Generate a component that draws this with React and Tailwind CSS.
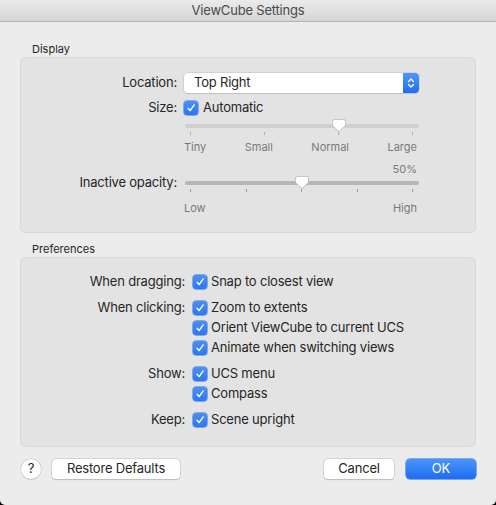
import React from "react"

const font = { fontFamily: "Inter, 'Liberation Sans', sans-serif" }

const Check = ({ className = "" }) => (
  <span
    className={`w-[14px] h-[14px] rounded-[3px] bg-gradient-to-b from-[#4a90f8] to-[#2a76f4] flex items-center justify-center shrink-0 shadow-[0_0_0_0.5px_#2a6bd8] ${className}`}
  >
    <svg width="10" height="10" viewBox="0 0 10 10" fill="none">
      <path d="M2 5.2 L4.1 7.6 L8.2 1.8" stroke="white" strokeWidth="1.4" strokeLinecap="round" strokeLinejoin="round" />
    </svg>
  </span>
)

const Thumb = ({ left }) => (
  <svg
    className="absolute top-[1px] drop-shadow-[0_0.5px_0.5px_rgba(0,0,0,0.3)]"
    style={{ left }}
    width="14"
    height="13"
    viewBox="0 0 14 13"
  >
    <path
      d="M2.5 0.5 H11.5 Q13.5 0.5 13.5 2.5 V6.5 L7 12.5 L0.5 6.5 V2.5 Q0.5 0.5 2.5 0.5 Z"
      fill="white"
      stroke="#bdbdbd"
      strokeWidth="0.6"
    />
  </svg>
)

const Slider = ({ thumb, ticks, trackColor, tickColor }) => (
  <div className="w-[235px]">
    <div className="relative h-[14px]">
      <div className={`absolute left-[1px] right-0 top-[6px] h-[4px] rounded-full ${trackColor}`}></div>
      <Thumb left={thumb} />
    </div>
    <div className="flex justify-between px-[6px] h-[3px]">
      {Array.from({ length: ticks }).map((_, i) => (
        <span key={i} className={`w-[1px] h-[3px] ${tickColor}`}></span>
      ))}
    </div>
  </div>
)

const PrefRow = ({ label, text, className = "" }) => (
  <div className={`flex items-center h-[20px] ${className}`}>
    <span className="w-[165px] text-right pr-[1px]">{label}</span>
    <Check className="ml-[7px]" />
    <span className="ml-[4px]">{text}</span>
  </div>
)

export default function App() {
  return (
    <div className="w-[496px] h-[505px] bg-black" style={font}>
      <div className="w-[496px] h-[505px] bg-[#ececec] rounded-b-[5px] overflow-hidden text-[13px] tracking-[-0.2px] text-[#262626]">
        {/* Title bar */}
        <div className="h-[22px] bg-gradient-to-b from-[#ebebeb] to-[#d5d5d5] border-b border-[#b4b4b4] flex items-center justify-center">
          <span className="text-[13px] text-[#4a4a4a]">ViewCube Settings</span>
        </div>

        <div className="px-[20px]">
          {/* Display */}
          <div className="mt-[20px] ml-[12px] h-[14px] leading-[14px] text-[11px] tracking-normal">Display</div>
          <div className="mt-[1px] h-[176px] bg-[#e3e3e3] border border-[#d8d8d8] rounded-[5px] flex flex-col">
            <div className="flex items-center h-[20px] mt-[15px]">
              <span className="w-[156px] text-right">Location:</span>
              <div className="ml-[7px] w-[235px] h-[20px] bg-white rounded-[4px] shadow-[0_0_0_0.5px_#c2c2c2,0_0.5px_1px_rgba(0,0,0,0.15)] flex items-center">
                <span className="flex-1 pl-[10px]">Top Right</span>
                <span className="w-[16px] h-[20px] rounded-r-[4px] bg-gradient-to-b from-[#4d98f9] to-[#1e6cf4] flex items-center justify-center">
                  <svg width="8" height="12" viewBox="0 0 8 12" fill="none">
                    <path d="M1.5 4.5 L4 2 L6.5 4.5" stroke="white" strokeWidth="1.3" strokeLinecap="round" strokeLinejoin="round" />
                    <path d="M1.5 7.5 L4 10 L6.5 7.5" stroke="white" strokeWidth="1.3" strokeLinecap="round" strokeLinejoin="round" />
                  </svg>
                </span>
              </div>
            </div>
            <div className="flex items-center h-[20px] mt-[5px]">
              <span className="w-[156px] text-right">Size:</span>
              <Check className="ml-[7px]" />
              <span className="ml-[5px]">Automatic</span>
            </div>
            <div className="flex">
              <span className="w-[156px]"></span>
              <div className="ml-[7px]">
                <Slider thumb={148} ticks={4} trackColor="bg-[#d0d0d0]" tickColor="bg-[#b0b0b0]" />
                <div className="mt-[6px] flex justify-between w-[233px] h-[13px] leading-[13px] text-[11px] tracking-normal text-[#7a7a7a]">
                  <span>Tiny</span>
                  <span>Small</span>
                  <span>Normal</span>
                  <span>Large</span>
                </div>
                <div className="mt-[9px] w-[233px] h-[12px] leading-[12px] text-[11px] tracking-normal text-[#7a7a7a] text-right">50%</div>
              </div>
            </div>
            <div className="flex">
              <span className="w-[156px] text-right leading-[13px] mt-[1px]">Inactive opacity:</span>
              <div className="ml-[7px]">
                <Slider thumb={111} ticks={5} trackColor="bg-[#b6b6b6]" tickColor="bg-[#9a9a9a]" />
              </div>
            </div>
            <div className="flex">
              <span className="w-[156px]"></span>
              <div className="ml-[7px] mt-[10px] flex justify-between w-[233px] h-[13px] leading-[13px] text-[11px] tracking-normal text-[#7a7a7a]">
                <span>Low</span>
                <span>High</span>
              </div>
            </div>
          </div>

          {/* Preferences */}
          <div className="mt-[9px] ml-[12px] h-[14px] leading-[14px] text-[11px] tracking-normal">Preferences</div>
          <div className="mt-[1px] h-[190px] bg-[#e3e3e3] border border-[#d8d8d8] rounded-[5px] pt-[14px] flex flex-col">
            <PrefRow label="When dragging:" text="Snap to closest view" />
            <PrefRow label="When clicking:" text="Zoom to extents" className="mt-[6px]" />
            <PrefRow label="" text="Orient ViewCube to current UCS" />
            <PrefRow label="" text="Animate when switching views" />
            <PrefRow label="Show:" text="UCS menu" className="mt-[6px]" />
            <PrefRow label="" text="Compass" />
            <PrefRow label="Keep:" text="Scene upright" className="mt-[6px]" />
          </div>

          {/* Buttons */}
          <div className="mt-[12px] flex items-center">
            <button className="ml-[1px] w-[20px] h-[20px] rounded-full bg-white shadow-[0_0_0_0.5px_#bdbdbd,0_0.5px_1px_rgba(0,0,0,0.2)] flex items-center justify-center text-[13px]">
              ?
            </button>
            <button className="ml-[11px] w-[128px] h-[20px] rounded-[4px] bg-white shadow-[0_0_0_0.5px_#bdbdbd,0_0.5px_1px_rgba(0,0,0,0.2)] text-[13px]">
              Restore Defaults
            </button>
            <div className="flex-1"></div>
            <button className="w-[70px] h-[20px] rounded-[4px] bg-white shadow-[0_0_0_0.5px_#bdbdbd,0_0.5px_1px_rgba(0,0,0,0.2)] text-[13px]">
              Cancel
            </button>
            <button className="ml-[12px] w-[70px] h-[20px] rounded-[4px] bg-gradient-to-b from-[#4a95f9] to-[#1d6cf4] shadow-[0_0_0_0.5px_#1b63df] text-white text-[13px]">
              OK
            </button>
          </div>
        </div>
      </div>
    </div>
  )
}
